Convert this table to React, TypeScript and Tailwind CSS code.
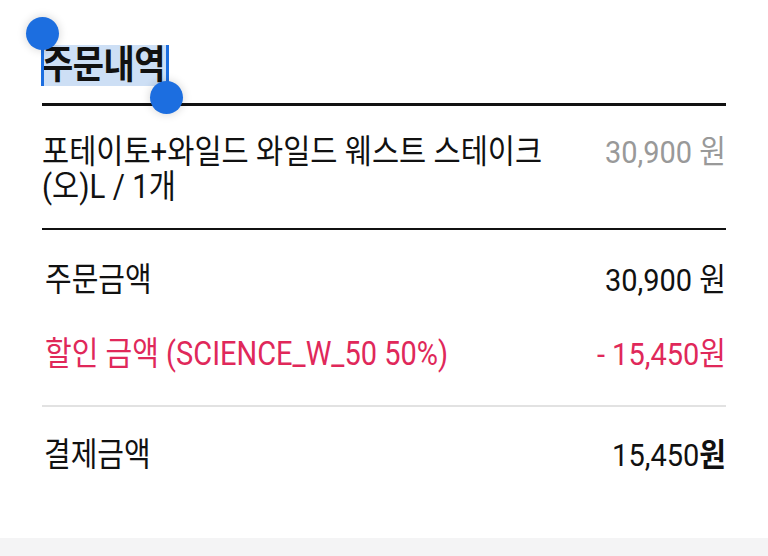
export default function App() {
  const font = { fontFamily: "Roboto, 'Noto Sans CJK KR', sans-serif" };
  return (
    <div className="w-[768px] h-[556px] bg-white flex flex-col" style={font}>
      <div className="flex-1 px-[42px]">
        {/* title with text selection */}
        <div className="pt-[45px]">
          <span className="relative inline-block bg-[#cddff5] h-[41px] pr-[2px]">
            <span className="inline-block scale-y-[1.12] text-[34px] leading-[41px] font-bold text-[#111] tracking-[-0.5px]">
              주문내역
            </span>
            <span className="absolute left-[-1px] top-[-12px] w-[3px] h-[53px] bg-[#1c6ee0]" />
            <span className="absolute left-[-16px] top-[-28px] w-[33px] h-[33px] rounded-full bg-[#1c6ee0] shadow-[0_0_10px_rgba(0,0,0,0.18)]" />
            <span className="absolute right-[-2px] top-0 w-[3px] h-[52px] bg-[#1c6ee0]" />
            <span className="absolute right-[-16px] top-[36px] w-[33px] h-[33px] rounded-full bg-[#1c6ee0] shadow-[0_0_10px_rgba(0,0,0,0.18)]" />
          </span>
        </div>
        <div className="mt-[17px] border-t-[3px] border-[#111]" />

        {/* item */}
        <div className="flex justify-between pt-[33px] pb-[27px] border-b-2 border-[#111]">
          <div className="text-[29.5px] leading-[31px] text-[#111] w-[540px] scale-y-[1.1] origin-center">
            포테이토+와일드 와일드 웨스트 스테이크
            <br />
            (오)L / 1개
          </div>
          <div className="text-[29px] leading-[31px] text-[#999] scale-y-[1.1]">30,900 원</div>
        </div>

        {/* amounts */}
        <div className="pt-[35px] pb-[35px] border-b-2 border-[#e2e2e2] flex flex-col gap-[43px]">
          <div className="flex justify-between text-[29px] leading-[31px] text-[#111]">
            <span className="scale-y-[1.12] pl-[3px]">주문금액</span>
            <span className="scale-y-[1.1]">30,900 원</span>
          </div>
          <div className="flex justify-between text-[29px] leading-[31px] text-[#e0285a]">
            <span className="scale-y-[1.12] pl-[3px]">할인 금액 (SCIENCE_W_50 50%)</span>
            <span className="scale-y-[1.1]">- 15,450원</span>
          </div>
        </div>

        <div className="pt-[33px] flex justify-between text-[29px] leading-[31px] text-[#111]">
          <span className="scale-y-[1.12] pl-[2px]">결제금액</span>
          <span className="scale-y-[1.1]">
            15,450<span className="font-bold">원</span>
          </span>
        </div>
      </div>
      <div className="h-[18px] bg-[#f4f4f5]" />
    </div>
  );
}
